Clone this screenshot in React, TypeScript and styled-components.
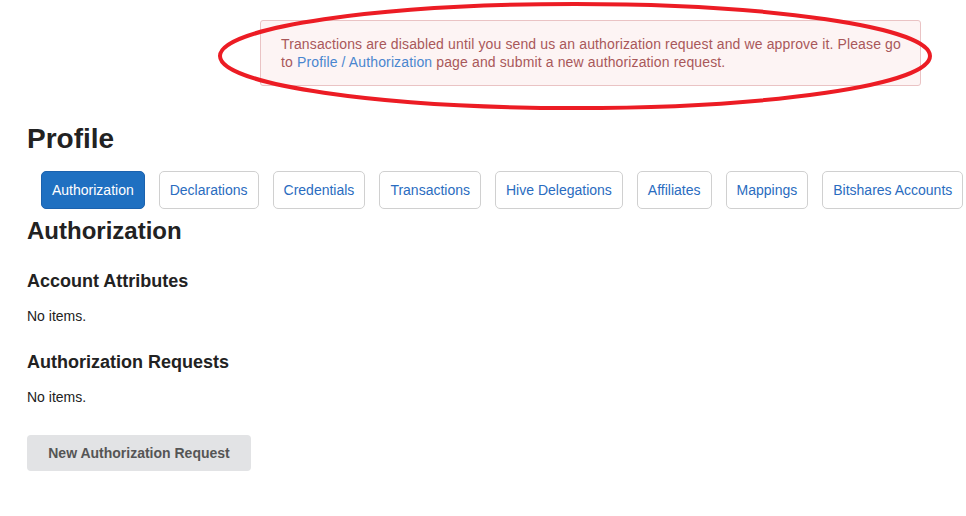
import React, { useState } from 'react';
import styled, { createGlobalStyle } from 'styled-components';

const GlobalStyle = createGlobalStyle`
  html, body {
    margin: 0;
    padding: 0;
    background: #fff;
    font-family: "Liberation Sans", Arial, sans-serif;
    color: #212529;
  }
`;

const Page = styled.div`
  position: relative;
  width: 966px;
  min-height: 516px;
  padding: 20px 0 0 27px;
  box-sizing: border-box;
`;

const Alert = styled.div`
  margin-left: 233px;
  width: 661px;
  box-sizing: border-box;
  padding: 14px 12px 14px 20px;
  background: #fdf4f4;
  border: 1px solid #eac3c4;
  border-radius: 3px;
  color: #a9585a;
  font-size: 14px;
  line-height: 18px;
  letter-spacing: 0.13px;

  a {
    color: #4a86cf;
    text-decoration: none;
  }
`;

const Annotation = styled.svg`
  position: absolute;
  left: 0;
  top: 0;
  pointer-events: none;
`;

const Title = styled.h1`
  margin: 36px 0 0;
  font-size: 28px;
  line-height: 34px;
  font-weight: 700;
  color: #222;
`;

const Tabs = styled.nav`
  display: flex;
  gap: 14px;
  margin-top: 15px;
  padding-left: 14px;
`;

const Tab = styled.button<{ $active?: boolean }>`
  height: 38px;
  padding: 0 10px;
  border-radius: 5px;
  border: 1px solid ${p => (p.$active ? '#1b62ae' : '#d0d0d0')};
  background: ${p => (p.$active ? '#1f70c1' : '#fff')};
  color: ${p => (p.$active ? '#fff' : '#2a6cc0')};
  font-family: inherit;
  font-size: 14px;
  cursor: pointer;
  white-space: nowrap;
`;

const SectionTitle = styled.h2`
  margin: 8px 0 0;
  font-size: 24px;
  line-height: 28px;
  font-weight: 700;
  color: #222;
`;

const SubTitle = styled.h3`
  margin: 25px 0 0;
  font-size: 18px;
  line-height: 22px;
  font-weight: 700;
  color: #222;
`;

const Empty = styled.p`
  margin: 16px 0 0;
  padding-bottom: 2px;
  font-size: 14px;
  line-height: 16px;
  color: #222;
`;

const Action = styled.button`
  margin-top: 28px;
  width: 224px;
  height: 36px;
  border: none;
  border-radius: 4px;
  background: #e2e3e5;
  color: #555;
  font-family: inherit;
  font-size: 14px;
  font-weight: 700;
  cursor: pointer;
`;

const tabs = [
  'Authorization',
  'Declarations',
  'Credentials',
  'Transactions',
  'Hive Delegations',
  'Affiliates',
  'Mappings',
  'Bitshares Accounts',
];

const App: React.FC = () => {
  const [active, setActive] = useState('Authorization');

  return (
    <Page>
      <GlobalStyle />
      <Alert>
        Transactions are disabled until you send us an authorization request and we approve it. Please go
        to <a href="#">Profile / Authorization</a> page and submit a new authorization request.
      </Alert>

      <Title>Profile</Title>
      <Tabs>
        {tabs.map(t => (
          <Tab key={t} $active={t === active} onClick={() => setActive(t)}>
            {t}
          </Tab>
        ))}
      </Tabs>

      <SectionTitle>Authorization</SectionTitle>
      <SubTitle>Account Attributes</SubTitle>
      <Empty>No items.</Empty>
      <SubTitle>Authorization Requests</SubTitle>
      <Empty>No items.</Empty>
      <Action>New Authorization Request</Action>

      {/* red hand-drawn ellipse annotation over the alert */}
      <Annotation width="966" height="120" viewBox="0 0 966 120">
        <ellipse cx="575" cy="56" rx="355" ry="52" fill="none" stroke="#ec1c24" strokeWidth="4" />
      </Annotation>
    </Page>
  );
};

export default App;
